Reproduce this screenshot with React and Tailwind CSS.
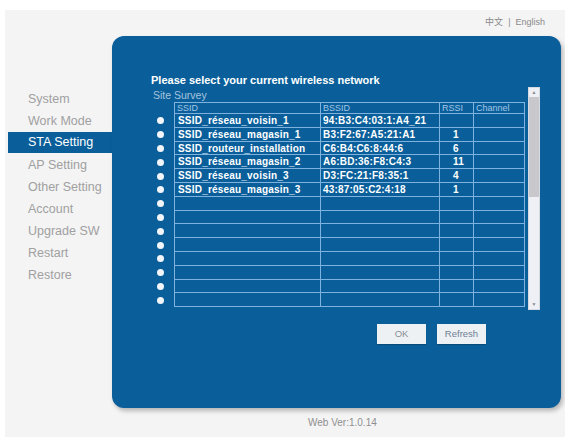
import React from "react";

const menu = ["System", "Work Mode", "STA Setting", "AP Setting", "Other Setting", "Account", "Upgrade SW", "Restart", "Restore"];

const rows = [
  ["SSID_réseau_voisin_1", "94:B3:C4:03:1:A4_21", ""],
  ["SSID_réseau_magasin_1", "B3:F2:67:A5:21:A1", "1"],
  ["SSID_routeur_installation", "C6:B4:C6:8:44:6", "6"],
  ["SSID_réseau_magasin_2", "A6:BD:36:F8:C4:3", "11"],
  ["SSID_réseau_voisin_3", "D3:FC:21:F8:35:1", "4"],
  ["SSID_réseau_magasin_3", "43:87:05:C2:4:18", "1"],
];

const allRows = [...rows];
while (allRows.length < 14) allRows.push(["", "", ""]);

export default function App() {
  return (
    <div className="w-[565px] h-[437px] bg-white pt-[10px] pl-[5px] overflow-hidden" style={{ fontFamily: '"Liberation Sans", Arial, sans-serif' }}>
      <div className="w-[560px] h-[427px] bg-[#f4f4f5] flex flex-col">
        <div className="h-[26px] flex items-center justify-end pr-[20px] text-[9px] text-[#8a8a8a] gap-[5px]">
          <span style={{ fontFamily: '"Liberation Sans", "Noto Sans CJK SC", sans-serif' }}>中文</span>
          <span>|</span>
          <span>English</span>
        </div>
        <div className="flex">
          <div className="w-[107px] pt-[52px]">
            {menu.map((m) => (
              <div
                key={m}
                className={
                  m === "STA Setting"
                    ? "ml-[3px] h-[21px] mb-[1px] flex items-center pl-[20px] bg-[#0a5f9b] text-white text-[12.5px]"
                    : "ml-[3px] h-[22px] flex items-center pl-[20px] text-[#a0a0a0] text-[12.5px]"
                }
              >
                {m}
              </div>
            ))}
          </div>
          <div className="w-[449px] h-[372px] rounded-[12px] bg-[#0a5f9b] shadow-[2px_3px_4px_rgba(0,0,0,0.25)] flex flex-col pt-[37px]">
            <div className="pl-[39px] h-[14px] text-[11px] leading-[14px] font-bold text-white">
              Please select your current wireless network
            </div>
            <div className="flex pl-[29px]">
              <div className="w-[385px] flex flex-col">
                <div className="h-[15px] pl-[12px] pt-[3px] text-[10.5px] leading-[11px] text-[#a6c4de]">Site Survey</div>
                <div className="flex">
                  <div className="w-[33px] flex flex-col pt-[12px]">
                    {allRows.map((_, i) => (
                      <div key={i} className="h-[13.8px] flex items-center justify-end pr-[10px]">
                        <div className="w-[7px] h-[7px] rounded-full bg-[#f2f5f9]" />
                      </div>
                    ))}
                  </div>
                  <div className="w-[351px] border-t border-l border-r border-[#7db3de]">
                    <div className="h-[11px] flex border-b border-[#7db3de] text-[9px] leading-[10px] text-[#a3c6e6]">
                      <div className="w-[146px] border-r border-[#7db3de] pl-[2px]">SSID</div>
                      <div className="w-[119px] border-r border-[#7db3de] pl-[2px]">BSSID</div>
                      <div className="w-[34px] border-r border-[#7db3de] pl-[2px]">RSSI</div>
                      <div className="flex-1 pl-[2px]">Channel</div>
                    </div>
                    {allRows.map((r, i) => (
                      <div key={i} className="h-[13.8px] flex border-b border-[#7db3de] text-[10px] leading-[12px] font-bold text-white tracking-[0.2px]">
                        <div className="w-[146px] border-r border-[#7db3de] pl-[3px] pt-[1px] whitespace-nowrap">{r[0]}</div>
                        <div className="w-[119px] border-r border-[#7db3de] pl-[2px] pt-[1px] whitespace-nowrap">{r[1]}</div>
                        <div className="w-[34px] border-r border-[#7db3de] pl-[13px] pt-[1px]">{r[2]}</div>
                        <div className="flex-1" />
                      </div>
                    ))}
                  </div>
                </div>
              </div>
              <div className="w-[12px] h-[223px] ml-[2px] bg-[#eef0f5] border border-[#d6dbe3] flex flex-col items-center">
                <div className="h-[9px] flex items-center justify-center text-[5px] text-[#8a8a8a] leading-none">▲</div>
                <div className="w-[10px] h-[100px] bg-[#c8c8cc]" />
                <div className="flex-1" />
                <div className="h-[9px] flex items-center justify-center text-[5px] text-[#8a8a8a] leading-none">▼</div>
              </div>
            </div>
            <div className="flex justify-end gap-[11px] pr-[75px] mt-[14px]">
              <button className="w-[49px] h-[20px] bg-[#eef1f4] text-[#8b8f96] text-[9.5px] flex items-center justify-center shadow-[0_1px_1px_rgba(0,0,0,0.2)]">OK</button>
              <button className="w-[49px] h-[20px] bg-[#eef1f4] text-[#6f7f95] text-[9.5px] flex items-center justify-center shadow-[0_1px_1px_rgba(0,0,0,0.2)]">Refresh</button>
            </div>
          </div>
        </div>
        <div className="flex-1 flex items-center pl-[303px] text-[10px] text-[#8f8f8f]">Web Ver:1.0.14</div>
      </div>
    </div>
  );
}
